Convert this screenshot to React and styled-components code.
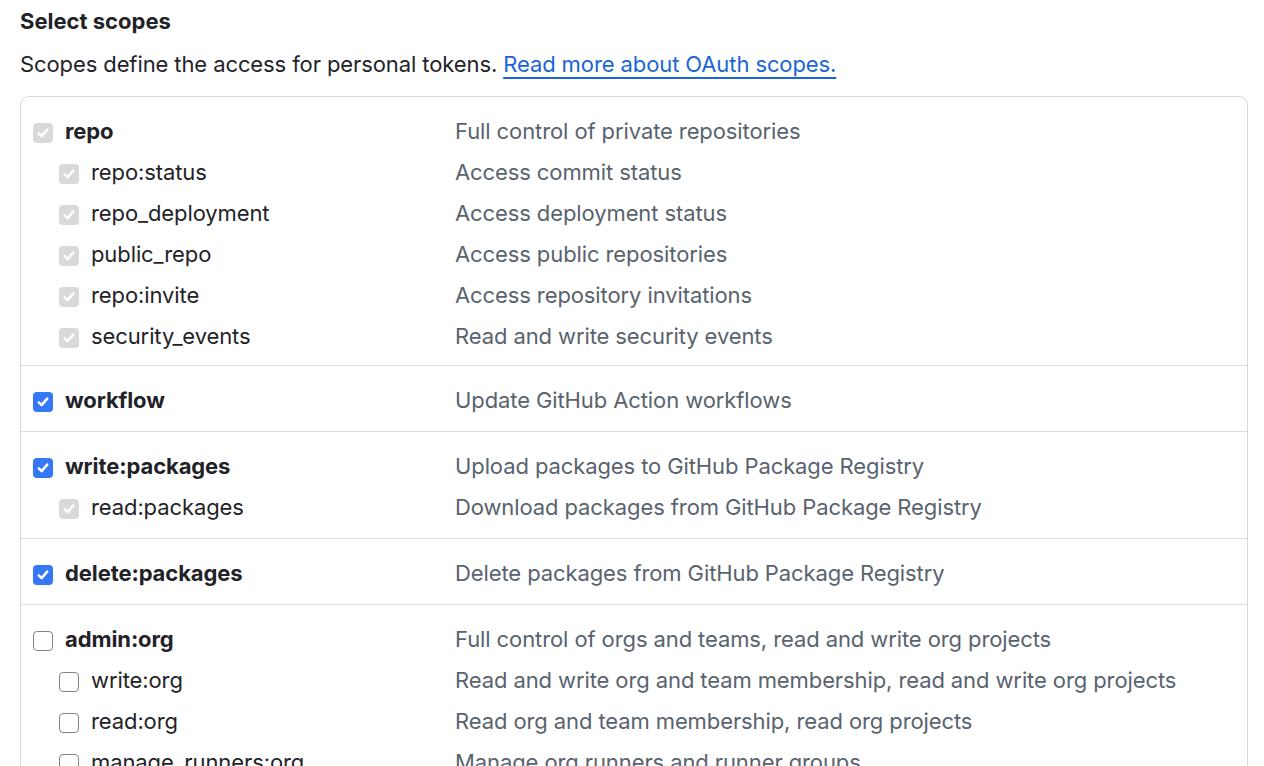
import React from "react";
import styled, { createGlobalStyle } from "styled-components";

const Global = createGlobalStyle`
  html, body { margin: 0; padding: 0; background: #fff; }
  body { font-family: Inter, "Noto Sans", "Liberation Sans", sans-serif; color: #1f2328; }
`;

const Page = styled.div`
  padding: 6px 16px 0 20px;
  width: 1228px;
`;

const Title = styled.h3`
  margin: 0;
  font-size: 22px;
  font-weight: 700;
  line-height: 30px;
  letter-spacing: 0;
`;

const Lead = styled.p`
  margin: 13px 0 16px;
  font-size: 22px;
  line-height: 31px;
  letter-spacing: -0.1px;
`;

const Link = styled.a`
  color: #1a66d6;
  text-decoration: underline;
  text-decoration-thickness: 2px;
  text-underline-offset: 5px;
`;

const Box = styled.div`
  border: 1px solid #d1d9e0;
  border-radius: 9px;
  border-bottom: none;
  border-bottom-left-radius: 0;
  border-bottom-right-radius: 0;
  height: 700px;
`;

const Group = styled.div`
  padding: 13px 12px ${(p) => (p.$tight ? "9px" : "11px")};
  border-bottom: 1px solid #d8dee4;
  &:last-child { border-bottom: none; }
`;

const Row = styled.div`
  display: grid;
  grid-template-columns: ${(p) => (p.$nested ? "396px" : "422px")} 1fr;
  align-items: center;
  height: 41px;
  padding-left: ${(p) => (p.$nested ? "26px" : "0")};
`;

const Name = styled.label`
  display: flex;
  align-items: center;
  gap: 12px;
  font-size: 22px;
  letter-spacing: -0.1px;
  font-weight: ${(p) => (p.$nested ? 400 : 700)};
  color: #1f2328;
`;

const Desc = styled.span`
  font-size: 22px;
  letter-spacing: -0.1px;
  color: #59636e;
`;

const Box20 = styled.span`
  flex: none;
  width: 20px;
  height: 20px;
  box-sizing: border-box;
  border-radius: 4px;
  display: inline-flex;
  align-items: center;
  justify-content: center;
  margin-top: 4px;
  background: ${(p) =>
    p.$state === "checked" ? "#3478f6" : p.$state === "disabled" ? "#d9d9d9" : "#fff"};
  border: ${(p) => (p.$state === "off" ? "1.5px solid #858585" : "none")};
`;

function Check({ state }) {
  return (
    <Box20 $state={state}>
      {state !== "off" && (
        <svg width="14" height="14" viewBox="0 0 14 14">
          <path
            d="M2.8 7.4 L5.6 10.1 L11.2 3.6"
            fill="none"
            stroke="#fff"
            strokeWidth="2.6"
            strokeLinecap="round"
            strokeLinejoin="round"
          />
        </svg>
      )}
    </Box20>
  );
}

const groups = [
  [
    ["repo", "Full control of private repositories", "disabled"],
    ["repo:status", "Access commit status", "disabled", true],
    ["repo_deployment", "Access deployment status", "disabled", true],
    ["public_repo", "Access public repositories", "disabled", true],
    ["repo:invite", "Access repository invitations", "disabled", true],
    ["security_events", "Read and write security events", "disabled", true],
  ],
  [["workflow", "Update GitHub Action workflows", "checked"]],
  [
    ["write:packages", "Upload packages to GitHub Package Registry", "checked"],
    ["read:packages", "Download packages from GitHub Package Registry", "disabled", true],
  ],
  [["delete:packages", "Delete packages from GitHub Package Registry", "checked"]],
  [
    ["admin:org", "Full control of orgs and teams, read and write org projects", "off"],
    ["write:org", "Read and write org and team membership, read and write org projects", "off", true],
    ["read:org", "Read org and team membership, read org projects", "off", true],
    ["manage_runners:org", "Manage org runners and runner groups", "off", true],
  ],
];

export default function App() {
  return (
    <>
      <Global />
      <Page>
        <Title>Select scopes</Title>
        <Lead>
          Scopes define the access for personal tokens.{" "}
          <Link href="#">Read more about OAuth scopes.</Link>
        </Lead>
        <Box>
          {groups.map((g, i) => (
            <Group key={i} $tight={i === 0}>
              {g.map(([name, desc, state, nested]) => (
                <Row key={name} $nested={nested}>
                  <Name $nested={nested}>
                    <Check state={state} />
                    {name}
                  </Name>
                  <Desc>{desc}</Desc>
                </Row>
              ))}
            </Group>
          ))}
        </Box>
      </Page>
    </>
  );
}
